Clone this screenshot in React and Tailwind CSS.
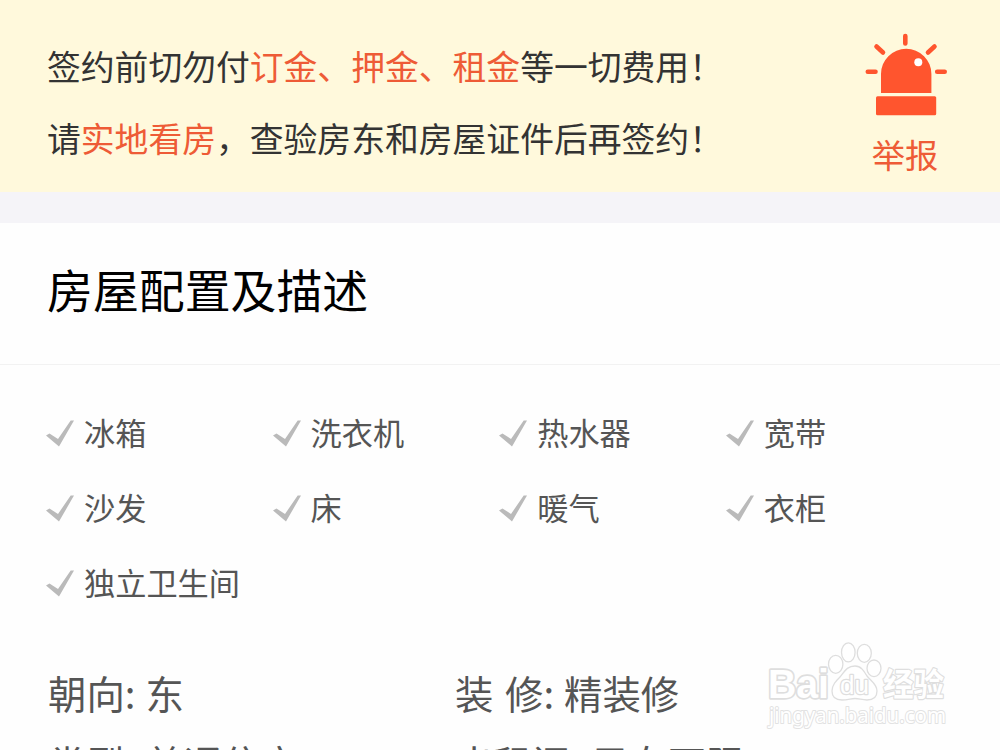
const facilities = ['冰箱', '洗衣机', '热水器', '宽带', '沙发', '床', '暖气', '衣柜', '独立卫生间'];

const details = [
  { label: '朝向:', value: '东' },
  { label: '装 修:', value: '精装修' },
  { label: '类型:', value: '普通住宅' },
  { label: '出租间:', value: '男女不限' },
];

const AlarmIcon = () => (
  <svg width="84" height="84" viewBox="0 0 84 84" fill="#ff552e" className="shrink-0">
    <path d="M18 61V42a25.200 25.200 0 0 1 50.400 0v19z" />
    <rect x="13" y="64.300" width="60.200" height="19" rx="1.500" />
    <circle cx="55.300" cy="30.300" r="4" fill="#fff" />
    <g stroke="#ff552e" strokeWidth="4.6" strokeLinecap="round">
      <path d="M42.300 4v7.500M13.500 14.500l6.500 6M71.500 14.500l-6.500 6M4.800 39.800h7.700M74.200 39.800h7.500" />
    </g>
  </svg>
);

const CheckIcon = () => (
  <svg width="29" height="27" viewBox="0 0 29 27" className="mt-1 shrink-0">
    <path d="M0 15.500l3.500-2 8.500 5.500L24.700 0.500h3.300L13 26.500z" fill="#bababa" />
  </svg>
);

const Watermark = () => (
  <svg
    className="absolute left-[764px] top-[638px]"
    width="190"
    height="96"
    viewBox="0 0 190 96"
    fill="#fff"
    stroke="#dedede"
    strokeWidth="1.3"
    strokeLinejoin="round"
    fontFamily="'Liberation Sans', 'Noto Sans CJK SC', sans-serif"
  >
    <text
      x="4"
      y="60"
      fontSize="41"
      fontWeight="700"
      strokeWidth="3.500"
      paintOrder="stroke"
      textLength="61"
      lengthAdjust="spacingAndGlyphs"
    >
      Bai
    </text>
    <ellipse cx="71.700" cy="26.300" rx="7.200" ry="9" />
    <ellipse cx="84.300" cy="14.300" rx="6.800" ry="9.500" />
    <ellipse cx="100.300" cy="15.300" rx="7" ry="9" />
    <ellipse cx="110" cy="30.300" rx="7" ry="8.300" />
    <path d="M91 28c-9 0-11 7-15 11s-8 8-8 14c0 7 5 9 10 9 6 0 9-1.500 13-1.500s7 1.500 12 1.500c6 0 10-3 10-9 0-7-6-10-10-15-3-5-6-10-12-10z" />
    <text x="76" y="56" fontSize="25" fontWeight="400" strokeWidth="2.400" paintOrder="stroke" textLength="29" lengthAdjust="spacingAndGlyphs">
      du
    </text>
    <text x="119" y="58" fontSize="32" fontWeight="700" strokeWidth="2.400" paintOrder="stroke" textLength="61" lengthAdjust="spacingAndGlyphs">
      经验
    </text>
    <text
      x="5"
      y="84.500"
      fontSize="21.500"
      fontFamily="'Noto Sans', sans-serif"
      stroke="#e2e2e2"
      strokeWidth="2"
      paintOrder="stroke"
      textLength="177"
      lengthAdjust="spacingAndGlyphs"
    >
      jingyan.baidu.com
    </text>
  </svg>
);

const SafetyNotice = () => (
  <section className="flex h-48 justify-between bg-[#fff9dc] pl-[47px] pr-[53px] text-[33.8px] text-[#333]">
    <div className="pt-[30px] leading-[72px]">
      <p>
        签约前切勿付<span className="text-[#ee5b36]">订金、押金、租金</span>等一切费用！
      </p>
      <p>
        请<span className="text-[#ee5b36]">实地看房</span>，查验房东和房屋证件后再签约！
      </p>
    </div>
    <button className="flex flex-col items-center pt-8 text-[33.3px] leading-[76px] text-[#ee5b36]">
      <AlarmIcon />
      <span>举报</span>
    </button>
  </section>
);

export default function App() {
  return (
    <main className="relative h-[750px] w-[1000px] overflow-hidden bg-[#fefefe] font-['Noto_Sans_CJK_SC',sans-serif]">
      <SafetyNotice />
      <div className="h-[31px] bg-[#f5f4f8]" />
      <h1 className="h-[142px] border-b border-[#f2f2f2] pl-[47px] text-[45.9px] leading-[130px] text-black">
        房屋配置及描述
      </h1>
      <ul className="grid grid-cols-[repeat(4,226.6px)] pl-[46px] pt-[29px] text-[31.2px] leading-[75px] text-[#555]">
        {facilities.map((name) => (
          <li key={name} className="flex items-center gap-[9px] whitespace-nowrap">
            <CheckIcon />
            {name}
          </li>
        ))}
      </ul>
      <dl className="grid grid-cols-[407px_1fr] pl-12 pt-[38px] text-[38.4px] leading-[70px] text-[#555]">
        {details.map(({ label, value }) => (
          <div key={label} className="flex gap-2.5 whitespace-nowrap">
            <dt className="[word-spacing:3px]">{label}</dt>
            <dd>{value}</dd>
          </div>
        ))}
      </dl>
      <Watermark />
    </main>
  );
}
